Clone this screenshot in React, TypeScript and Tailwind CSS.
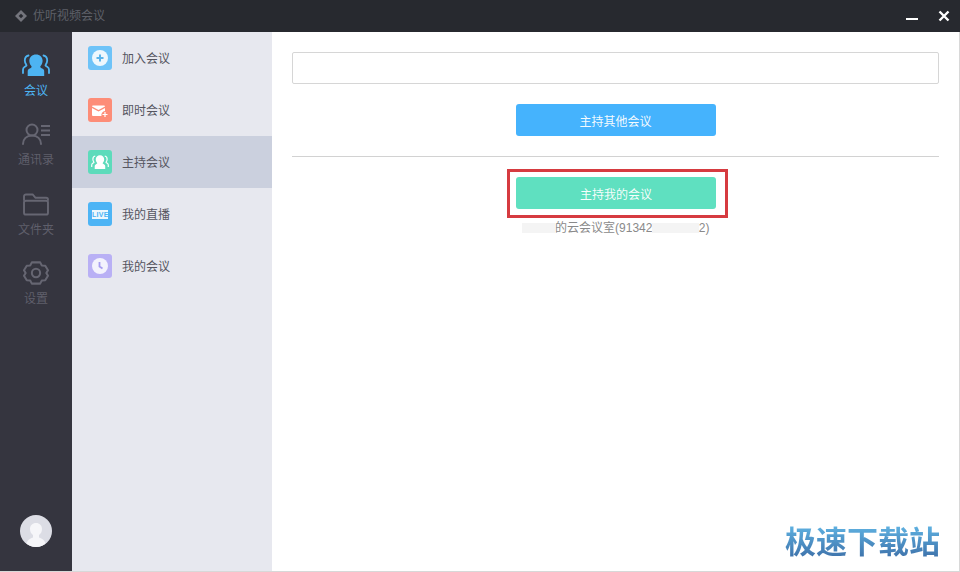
const font = "font-['Liberation_Sans','Noto_Sans_CJK_SC',sans-serif]"

function MeetingIcon({ color }: { color: string }) {
  return (
    <svg width="28" height="22" viewBox="0 0 28 22" fill="none">
      <path d="M14 .5c3.900 0 6.600 2.700 6.600 6.300 0 2.300-.9 4-2 5.300-.6.700-.3 1.400.5 1.800l1.600.9c1 .6 1.500 1.500 1.500 2.600V22H5.700v-4.600c0-1.100.5-2 1.500-2.600l1.600-.9c.8-.4 1.100-1.100.5-1.800-1.100-1.300-2-3-2-5.300C7.400 3.200 10.100.5 14 .5z" fill={color} />
      <path d="M6.500 1.500C4.300 2 2.800 4 2.800 6.500c0 1.800.8 3.200 1.500 4.200.4.500.2 1-.3 1.300l-1.500.9C1.500 13.500 1 14.500 1 15.700v3.300M21.500 1.500C23.700 2 25.200 4 25.200 6.500c0 1.800-.8 3.200-1.500 4.200-.4.500-.2 1 .3 1.300l1.500.9c1 .6 1.500 1.600 1.500 2.800v3.300" stroke={color} strokeWidth="1.800" strokeLinecap="round" />
    </svg>
  )
}

function ContactsIcon() {
  return (
    <svg width="30" height="22" viewBox="0 0 30 22" fill="none" stroke="#666672" strokeWidth="2">
      <circle cx="11" cy="7" r="5.500" />
      <path d="M2 21c0-5 3.500-8.500 9-8.500s9 3.500 9 8.500" strokeLinecap="round" />
      <path d="M20 3h9M20 7.500h9M20 12h9" />
    </svg>
  )
}

function FolderIcon() {
  return (
    <svg width="28" height="23" viewBox="0 0 28 24" fill="none" stroke="#666672" strokeWidth="2" strokeLinejoin="round">
      <path d="M1.500 8V3.500a2 2 0 0 1 2-2h7l3 3.500h11a2 2 0 0 1 2 2V8" />
      <rect x="1.500" y="8" width="25" height="14.500" rx="2" />
    </svg>
  )
}

function SettingsIcon() {
  return (
    <svg width="26" height="24" viewBox="0 0 28 26" fill="none" stroke="#666672" strokeWidth="2.200" strokeLinejoin="round">
      <path d="M9.500 1.500h9l1.800 3.300 3.700.4 3 4.800-1.800 3 1.800 3-3 4.800-3.700.4-1.800 3.300h-9l-1.800-3.300-3.700-.4-3-4.800 1.800-3-1.800-3 3-4.800 3.700-.4z" />
      <circle cx="14" cy="13" r="4.500" />
    </svg>
  )
}

function NavItem({ icon, label, active, className }: { icon: React.ReactNode; label: string; active?: boolean; className: string }) {
  return (
    <div className={`flex flex-col items-center ${className}`}>
      <div className="h-[26px] flex items-center justify-center">{icon}</div>
      <span className={`mt-[5px] text-[12px] leading-[16px] ${active ? "text-[#4db4f2]" : "text-[#5f5f6b]"}`}>{label}</span>
    </div>
  )
}

function MenuItem({ color, label, active, children }: { color: string; label: string; active?: boolean; children: React.ReactNode }) {
  return (
    <div className={`h-[52px] flex items-center pl-[16px] ${active ? "bg-[#cbd0de]" : ""}`}>
      <div className={`w-[24px] h-[24px] rounded-[3px] flex items-center justify-center ${color}`}>{children}</div>
      <span className="ml-[10px] mt-[2px] text-[12px] text-[#55555f]">{label}</span>
    </div>
  )
}

export default function App() {
  return (
    <div className={`w-[960px] h-[572px] flex flex-col overflow-hidden bg-white ${font}`}>
      <div className="h-[32px] shrink-0 bg-[#27292f] flex items-center pl-[15px] pr-[10px]">
        <svg width="12" height="12" viewBox="0 0 12 12">
          <path d="M6 0l6 6-6 6-6-6z" fill="#74757d" />
          <path d="M6 3.700L8.300 6 6 8.300 3.700 6z" fill="#27292f" />
        </svg>
        <span className="ml-[6px] text-[12px] text-[#5e6068]">优听视频会议</span>
        <div className="ml-auto flex items-center gap-[20px]">
          <div className="w-[12px] h-[2px] bg-white mt-[6px]" />
          <svg width="12" height="12" viewBox="0 0 12 12" stroke="white" strokeWidth="2.400">
            <path d="M1.500 1.500l9 9M10.500 1.500l-9 9" />
          </svg>
        </div>
      </div>
      <div className="flex-1 flex min-h-0 border-b border-[#d8d8d8]">
        <aside className="w-[72px] shrink-0 bg-[#35353f] flex flex-col items-center pt-[20px] pb-[24px]">
          <NavItem icon={<MeetingIcon color="#4db4f2" />} label="会议" active className="mb-[22px]" />
          <NavItem icon={<ContactsIcon />} label="通讯录" className="mb-[23px]" />
          <NavItem icon={<FolderIcon />} label="文件夹" className="mb-[22px]" />
          <NavItem icon={<SettingsIcon />} label="设置" className="" />
          <div className="mt-auto w-[32px] h-[32px] rounded-full bg-[#dcdde5] flex items-center justify-center overflow-hidden">
            <svg width="32" height="32" viewBox="0 0 32 32">
              <path d="M6 32c0-6 3-8 7-9.500v-2.500c-2-1.500-3-3.500-3-6 0-3.500 2.500-6 6-6s6 2.500 6 6c0 2.500-1 4.500-3 6v2.500c4 1.500 7 3.500 7 9.500z" fill="#f6f6f9" />
            </svg>
          </div>
        </aside>
        <nav className="w-[200px] shrink-0 bg-[#e7e8ef]">
          <MenuItem color="bg-[#6ec3f8]" label="加入会议">
            <svg width="16" height="16" viewBox="0 0 16 16">
              <circle cx="8" cy="8" r="8" fill="#eef7fd" />
              <path d="M8 4.500v7M4.500 8h7" stroke="#5cb4ea" strokeWidth="2" />
            </svg>
          </MenuItem>
          <MenuItem color="bg-[#fd8d78]" label="即时会议">
            <svg width="18" height="16" viewBox="0 0 18 16">
              <path d="M1 4.500a1 1 0 0 1 1-1h11a1 1 0 0 1 1 1L7.500 8 1 4.500z" fill="#fff" />
              <path d="M1 6l6.500 3.500L14 6v3a4 4 0 0 0-3.500 5H2a1 1 0 0 1-1-1z" fill="#fff" />
              <path d="M14 10v5M11.500 12.500h5" stroke="#fff" strokeWidth="1.200" />
            </svg>
          </MenuItem>
          <MenuItem color="bg-[#5ddbbb]" label="主持会议" active>
            <svg width="18" height="14" viewBox="0 0 28 22" fill="none">
              <path d="M14 .5c3.900 0 6.600 2.700 6.600 6.300 0 2.300-.9 4-2 5.300-.6.700-.3 1.400.5 1.800l1.600.9c1 .6 1.500 1.500 1.500 2.600V22H5.700v-4.600c0-1.100.5-2 1.500-2.600l1.600-.9c.8-.4 1.100-1.100.5-1.800-1.100-1.300-2-3-2-5.300C7.400 3.200 10.100.5 14 .5z" fill="#fff" />
              <path d="M6.500 1.500C4.300 2 2.800 4 2.800 6.500c0 1.800.8 3.200 1.500 4.200.4.500.2 1-.3 1.300l-1.500.9C1.500 13.500 1 14.500 1 15.700v3.300M21.500 1.500C23.700 2 25.200 4 25.200 6.500c0 1.800-.8 3.200-1.500 4.200-.4.500-.2 1 .3 1.300l1.500.9c1 .6 1.500 1.600 1.500 2.800v3.300" stroke="#fff" strokeWidth="1.800" />
            </svg>
          </MenuItem>
          <MenuItem color="bg-[#4db4f5]" label="我的直播">
            <div className="w-[16px] h-[9px] bg-[#eef7fd] text-[#4db4f5] text-[7px] leading-[9px] font-bold text-center tracking-[0.3px]">LIVE</div>
          </MenuItem>
          <MenuItem color="bg-[#b9b0f5]" label="我的会议">
            <svg width="16" height="16" viewBox="0 0 16 16">
              <circle cx="8" cy="8" r="8" fill="#f3f2fd" />
              <path d="M7.500 4v4.500l3 2" stroke="#a79df0" strokeWidth="1.800" fill="none" />
            </svg>
          </MenuItem>
        </nav>
        <main className="flex-1 flex flex-col items-center px-[20px] pt-[20px] border-r border-[#d8d8d8]">
          <div className="w-full h-[32px] rounded-[2px] border border-[#d6d6d6] bg-white" />
          <button className="mt-[20px] w-[200px] h-[32px] pt-[3px] rounded-[3px] bg-[#45b3fd] text-white/95 text-[12px]">主持其他会议</button>
          <div className="mt-[20px] w-full h-px bg-[#d2d2d2]" />
          <div className="mt-[12px] ml-[4px] pl-[6px] pr-[9px] pt-[5px] pb-[6px] border-[3px] border-[#d63b40]">
            <button className="block w-[200px] h-[32px] pt-[3px] rounded-[3px] bg-[#5fe0c0] text-white/95 text-[12px]">主持我的会议</button>
          </div>
          <p className="mt-[2px] w-[188px] flex items-center text-[12px] leading-[16px] text-[#8a8a8a] whitespace-nowrap">
            <span className="w-[34px] h-[10px] bg-[#f4f4f4]" />
            <span>的云会议室(91342</span>
            <span className="w-[47px] h-[10px] bg-[#f4f4f4]" />
            <span>2)</span>
          </p>
          <div className="mt-auto mb-[14px] self-end mr-[-1px] text-[31px] leading-[34px] font-bold whitespace-nowrap text-transparent bg-clip-text bg-gradient-to-b from-[#62b7e6] to-[#3f74ac] font-['Noto_Sans_CJK_SC',sans-serif]">极速下载站</div>
        </main>
      </div>
    </div>
  )
}
